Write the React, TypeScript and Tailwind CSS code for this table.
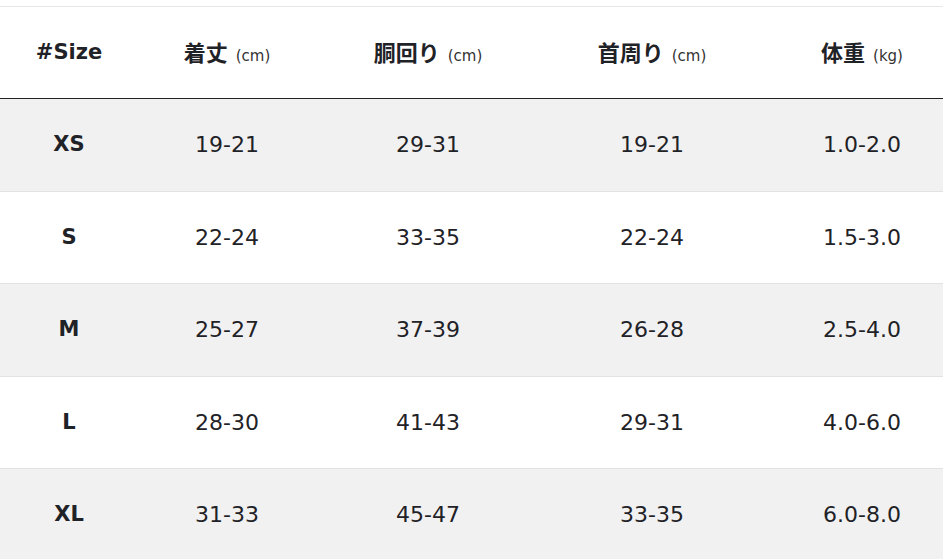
const sizes = [
  { size: "XS", length: "19-21", waist: "29-31", neck: "19-21", weight: "1.0-2.0" },
  { size: "S", length: "22-24", waist: "33-35", neck: "22-24", weight: "1.5-3.0" },
  { size: "M", length: "25-27", waist: "37-39", neck: "26-28", weight: "2.5-4.0" },
  { size: "L", length: "28-30", waist: "41-43", neck: "29-31", weight: "4.0-6.0" },
  { size: "XL", length: "31-33", waist: "45-47", neck: "33-35", weight: "6.0-8.0" },
];

const headers = [
  { label: "#Size", unit: "" },
  { label: "着丈", unit: "(cm)" },
  { label: "胴回り", unit: "(cm)" },
  { label: "首周り", unit: "(cm)" },
  { label: "体重", unit: "(kg)" },
];

const font = "font-['DejaVu_Sans','Noto_Sans_CJK_JP',sans-serif]";
const cols = "grid grid-cols-[138px_178px_224px_224px_196px]";

export default function App() {
  return (
    <div className={`w-[943px] h-[559px] overflow-hidden bg-white text-[#1f2226] ${font}`}>
      <div className="w-[960px] pt-[6px]">
        {/* header */}
        <div className={`${cols} h-[93px] border-t border-[#e6e6e6] border-b border-b-[#222]`}>
          {headers.map((h) =>
            h.unit ? (
              <div key={h.label} className="flex items-center justify-center">
                <div className="flex items-baseline -mt-[3px]">
                  <span className="text-[22px] font-bold font-['Noto_Sans_CJK_JP',sans-serif]">{h.label}</span>
                  <span className="ml-[8px] text-[15px] text-[#333]">{h.unit}</span>
                </div>
              </div>
            ) : (
              <div key={h.label} className="flex items-center justify-center">
                <span className="text-[21px] font-bold">{h.label}</span>
              </div>
            )
          )}
        </div>

        {/* rows */}
        {sizes.map((r, i) => (
          <div
            key={r.size}
            className={`${cols} h-[92.5px] border-b border-[#e2e2e2] ${i % 2 === 0 ? "bg-[#f1f1f1]" : "bg-white"}`}
          >
            <div className="flex items-center justify-center text-[21px] font-bold">{r.size}</div>
            <div className="flex items-center justify-center text-[22px]">{r.length}</div>
            <div className="flex items-center justify-center text-[22px]">{r.waist}</div>
            <div className="flex items-center justify-center text-[22px]">{r.neck}</div>
            <div className="flex items-center justify-center text-[22px]">{r.weight}</div>
          </div>
        ))}
      </div>
    </div>
  );
}
